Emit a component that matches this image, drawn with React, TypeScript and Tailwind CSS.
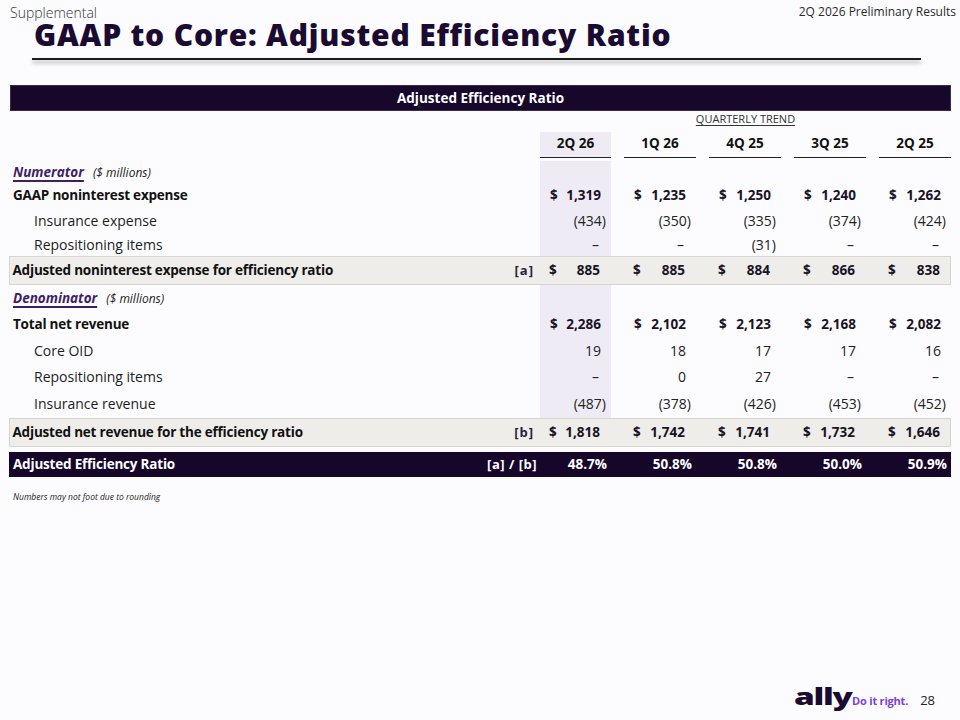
import React from 'react';

const widths = ['w-[71px]', 'w-[72px]', 'w-[72px]', 'w-[72px]', 'w-[72px]'];
const quarters = ['2Q 26', '1Q 26', '4Q 25', '3Q 25', '2Q 25'];

function Num({ v }: { v: string }) {
  if (v.startsWith('(')) {
    return (
      <span>
        {v.slice(0, -1)}
        <span className="mr-[-5px]">)</span>
      </span>
    );
  }
  if (v === '-') return <span className="pr-[2px]">–</span>;
  return <span>{v}</span>;
}

type RowProps = {
  label: React.ReactNode;
  vals: string[];
  h: string;
  kind: 'bold' | 'indent' | 'gray' | 'section';
  dollar?: boolean;
  tag?: string;
};

function DataRow({ label, vals, h, kind, dollar, tag }: RowProps) {
  const gray = kind === 'gray';
  const bold = kind === 'bold' || kind === 'gray';
  return (
    <div className={`flex ${h} ${gray ? 'bg-[#eeede9] border-[1.5px] border-[#d7d5d0]' : ''}`}>
      <div
        className={`flex items-center justify-between ${
          gray ? 'w-[529px] pl-[2.5px] pr-[5px]' : 'w-[531px] pl-[4px] pr-[5px]'
        } ${kind === 'indent' ? 'pl-[25px]' : ''}`}
      >
        <div
          className={
            bold
              ? 'text-[13.5px] font-bold text-[#111111] tracking-[-0.2px]'
              : kind === 'indent'
              ? 'text-[14px] text-[#1c1c1c]'
              : ''
          }
        >
          {label}
        </div>
        {tag ? <div className="text-[13px] font-bold text-[#2b1e40] tracking-[1px]">{tag}</div> : null}
      </div>
      <div className="flex gap-[13px]">
        {vals.map((v, i) => (
          <div
            key={i}
            className={`${widths[i]} flex items-center justify-between pl-[10px] pr-[10px] ${
              i === 0 && !gray ? 'bg-[#efebf5]' : ''
            } ${bold ? 'font-bold text-[13.5px] text-[#1a1326]' : 'text-[14px] text-[#222222]'}`}
          >
            <span>{dollar && v !== '' ? '$' : ''}</span>
            {v !== '' ? <Num v={v} /> : <span />}
          </div>
        ))}
      </div>
    </div>
  );
}

function SectionLabel({ text }: { text: string }) {
  return (
    <span className="flex items-baseline">
      <span className="text-[13.5px] font-bold italic text-[#3e1f63] underline decoration-[1.5px] underline-offset-[3px]">
        {text}
      </span>
      <span className="ml-[9px] text-[12px] italic text-[#222222]">($ millions)</span>
    </span>
  );
}

export default function App() {
  const empty = ['', '', '', '', ''];
  return (
    <div className="w-[960px] h-[720px] bg-[#fcfcfe] flex flex-col overflow-hidden font-['Open_Sans','Noto_Sans',sans-serif]">
      <div className="flex justify-between h-[20px]">
        <div className="pl-[10px] pt-[6px] text-[14px] leading-[14px] text-[#333333] font-light">Supplemental</div>
        <div className="pr-[4px] pt-[5px] text-[12px] leading-[14px] text-[#2a2a2a]">2Q 2026 Preliminary Results</div>
      </div>
      <div className="h-[30px] pl-[34px] text-[30px] leading-[30px] font-extrabold tracking-[0.8px] text-[#1b0b33]">
        GAAP to Core: Adjusted Efficiency Ratio
      </div>
      <div className="mt-[8px] ml-[32px] w-[889px] h-[2px] bg-[#1c1c1c] shadow-[0_3px_4px_rgba(0,0,0,0.35)]" />

      <div className="mt-[25px] ml-[10px] w-[941px] h-[26px] bg-[#16072b] border border-[#3a2b4f] flex items-center justify-center text-white text-[13.5px] font-bold">
        Adjusted Efficiency Ratio
      </div>

      <div className="ml-[9px] w-[942px] flex flex-col">
        <div className="flex h-[16px]">
          <div className="w-[531px]" />
          <div className="w-[411px] text-center text-[11px] leading-[16px] text-[#333333] underline underline-offset-[2px]">
            QUARTERLY TREND
          </div>
        </div>
        <div className="flex mt-[5px] h-[26px]">
          <div className="w-[531px]" />
          <div className="flex gap-[13px]">
            {quarters.map((q, i) => (
              <div
                key={q}
                className={`${widths[i]} flex items-center justify-center pb-[2px] border-b-[1.5px] border-[#222222] text-[13.5px] font-bold text-[#111111] ${
                  i === 0 ? 'bg-[#efebf5]' : ''
                }`}
              >
                {q}
              </div>
            ))}
          </div>
        </div>
        <div className="mt-[3px]" />
        <DataRow kind="section" h="h-[22px]" label={<SectionLabel text="Numerator" />} vals={empty} />
        <DataRow kind="bold" h="h-[25px]" dollar label="GAAP noninterest expense" vals={['1,319', '1,235', '1,250', '1,240', '1,262']} />
        <DataRow kind="indent" h="h-[25px]" label="Insurance expense" vals={['(434)', '(350)', '(335)', '(374)', '(424)']} />
        <DataRow kind="indent" h="h-[23px]" label="Repositioning items" vals={['-', '-', '(31)', '-', '-']} />
        <DataRow kind="gray" h="h-[29px]" dollar tag="[a]" label="Adjusted noninterest expense for efficiency ratio" vals={['885', '885', '884', '866', '838']} />
        <DataRow kind="section" h="h-[27px]" label={<SectionLabel text="Denominator" />} vals={empty} />
        <DataRow kind="bold" h="h-[25px]" dollar label="Total net revenue" vals={['2,286', '2,102', '2,123', '2,168', '2,082']} />
        <DataRow kind="indent" h="h-[27px]" label="Core OID" vals={['19', '18', '17', '17', '16']} />
        <DataRow kind="indent" h="h-[25px]" label="Repositioning items" vals={['-', '0', '27', '-', '-']} />
        <DataRow kind="indent" h="h-[29px]" label="Insurance revenue" vals={['(487)', '(378)', '(426)', '(453)', '(452)']} />
        <DataRow kind="gray" h="h-[29px]" dollar tag="[b]" label="Adjusted net revenue for the efficiency ratio" vals={['1,818', '1,742', '1,741', '1,732', '1,646']} />

        <div className="mt-[5px] h-[25px] flex bg-[#15062a] text-white font-bold text-[13.5px]">
          <div className="w-[531px] flex items-center justify-between pl-[4px] pr-[3px]">
            <span className="tracking-[-0.2px]">Adjusted Efficiency Ratio</span>
            <span className="text-[13px] tracking-[0.5px]">[a] / [b]</span>
          </div>
          <div className="flex gap-[13px]">
            {['48.7%', '50.8%', '50.8%', '50.0%', '50.9%'].map((v, i) => (
              <div key={i} className={`${widths[i]} flex items-center justify-end pr-[4px]`}>
                {v}
              </div>
            ))}
          </div>
        </div>
        <div className="mt-[15px] pl-[4px] text-[8.5px] leading-[10px] italic text-[#222222]">
          Numbers may not foot due to rounding
        </div>
      </div>

      <div className="mt-auto flex items-baseline justify-end pr-[25px] pb-[8px]">
        <div className="w-[58px] h-[31px] flex items-end">
          <span className="inline-block origin-bottom-left scale-x-[1.45] text-[23px] leading-[31px] font-extrabold tracking-[-0.9px] text-[#1b0b30]">
            ally
          </span>
        </div>
        <span className="text-[11px] font-bold text-[#7a3ee0] tracking-[-0.2px]">Do it right.</span>
        <span className="ml-[12px] text-[13px] text-[#222222]">28</span>
      </div>
    </div>
  );
}
